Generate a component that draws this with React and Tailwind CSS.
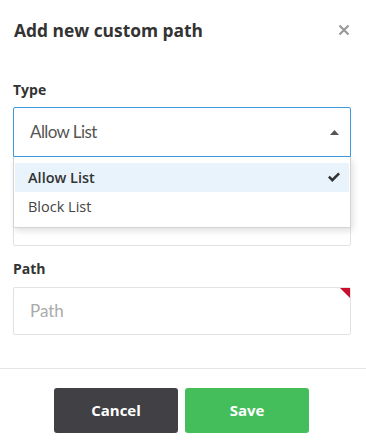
export default function App() {
  return (
    <div className="w-[366px] h-[446px] bg-white relative font-['Open_Sans',sans-serif] text-[#333] overflow-hidden">
      {/* Header */}
      <div className="flex items-start justify-between pl-[14px] pr-[16px] pt-[18px] h-[62px]">
        <h2 className="text-[17.4px] font-bold leading-[24px] text-[#333]">Add new custom path</h2>
        <button className="mt-[6px] text-[#999]">
          <svg width="12" height="12" viewBox="0 0 12 12">
            <path d="M1.5 1.5 L10.5 10.5 M10.5 1.5 L1.5 10.5" stroke="currentColor" strokeWidth="2.2" />
          </svg>
        </button>
      </div>

      {/* Form */}
      <div className="px-[13px] w-[364px] pt-[18px]">
        <label className="block text-[14px] font-bold leading-[20px] mb-[7px]">Type</label>
        <div className="relative">
          <div className="h-[50px] border border-[#3d9ae0] rounded-t-[2px] flex items-center justify-between pl-[16px] pr-[11px]">
            <span className="font-['Lato',sans-serif] text-[17px] text-[#555] tracking-[-0.6px]">Allow List</span>
            <svg width="9" height="5" viewBox="0 0 9 5" className="text-[#555]">
              <path d="M0 5 L4.5 0 L9 5 Z" fill="currentColor" />
            </svg>
          </div>
          {/* Dropdown menu */}
          <div className="absolute left-0 right-0 top-[50px] z-10 bg-white border border-[#d4d4d4] border-t-0 rounded-b-[2px] shadow-[2px_3px_6px_rgba(0,0,0,0.12)] pt-[6px] pb-[6px]">
            <div className="h-[29px] bg-[#e9f3fc] flex items-center justify-between pl-[13px] pr-[8px] mx-[1px]">
              <span className="text-[14.5px] font-semibold text-[#333]">Allow List</span>
              <svg width="14" height="11" viewBox="0 0 14 11" className="text-[#333]">
                <path d="M1 5.6 L2.8 3.8 L5.3 6.3 L11.2 0.5 L13 2.3 L5.3 10 Z" fill="currentColor" />
              </svg>
            </div>
            <div className="h-[29px] flex items-center pl-[14px]">
              <span className="text-[14.5px] text-[#444]">Block List</span>
            </div>
          </div>
        </div>

        <div className="h-[20px] mt-[17px] mb-[4px]" />
        <div className="h-[48px] border border-[#e2e2e2] rounded-[2px] flex items-center pl-[16px]">
          <span className="font-['Lato',sans-serif] text-[17px] text-[#b5b5b5]">Alias name</span>
        </div>

        <label className="block text-[14px] font-bold leading-[20px] mt-[13px] mb-[8px]">Path</label>
        <div className="relative h-[48px] border border-[#e2e2e2] rounded-[2px] flex items-center pl-[16px]">
          <span className="font-['Lato',sans-serif] text-[17px] text-[#aaa]">Path</span>
          <svg width="10" height="10" viewBox="0 0 10 10" className="absolute top-0 right-0">
            <path d="M0 0 L10 0 L10 10 Z" fill="#c8102e" />
          </svg>
        </div>
      </div>

      {/* Footer */}
      <div className="absolute left-0 right-0 top-[368px] border-t border-[#e5e5e5] flex justify-center gap-[7px] pt-[19px] pr-[3px]">
        <button className="w-[124px] h-[45px] rounded-[3px] bg-[#414045] text-white text-[15px] font-bold">Cancel</button>
        <button className="w-[124px] h-[45px] rounded-[3px] bg-[#43be5b] text-white text-[15px] font-bold">Save</button>
      </div>
    </div>
  );
}
